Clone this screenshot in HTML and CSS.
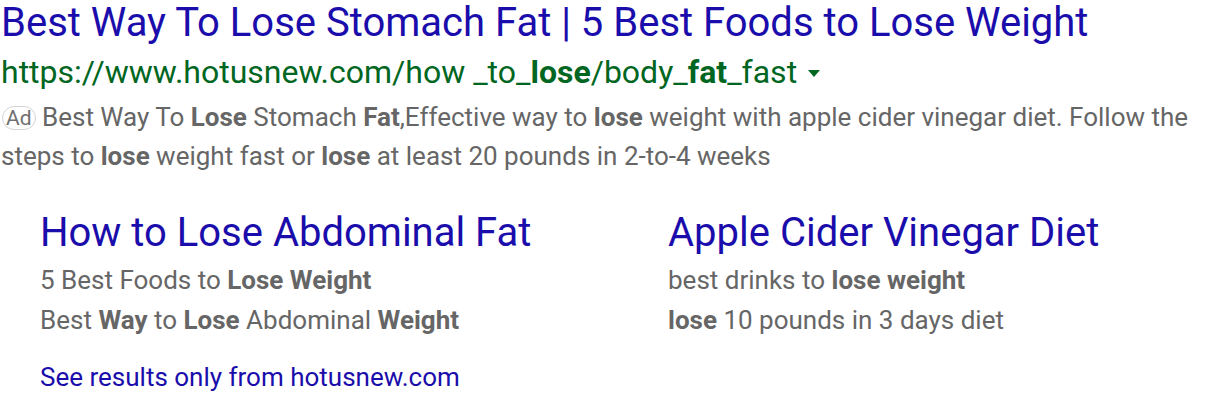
FILE: index.html
```html
<!DOCTYPE html>
<html>
<head>
<meta charset="utf-8">
<link rel="stylesheet" href="styles.css">
</head>
<body>
<div class="result">
  <h3 class="title">Best Way To Lose Stomach Fat | 5 Best Foods to Lose Weight</h3>
  <div class="url"><span>https://www.hotusnew.com/how _to_<b>lose</b>/body_<b>fat</b>_fast</span><span class="arrow"></span></div>
  <div class="desc"><span class="ad">Ad</span> Best Way To <b>Lose</b> Stomach <b>Fat</b>,Effective way to <b>lose</b> weight with apple cider vinegar diet. Follow the steps to <b>lose</b> weight fast or <b>lose</b> at least 20 pounds in 2-to-4 weeks</div>
  <div class="sitelinks">
    <div class="sitelink">
      <div class="sl-title">How to Lose Abdominal Fat</div>
      <div class="sl-lines">
        <div class="sl-line">5 Best Foods to <b>Lose Weight</b></div>
        <div class="sl-line">Best <b>Way</b> to <b>Lose</b> Abdominal <b>Weight</b></div>
      </div>
    </div>
    <div class="sitelink">
      <div class="sl-title">Apple Cider Vinegar Diet</div>
      <div class="sl-lines">
        <div class="sl-line">best drinks to <b>lose weight</b></div>
        <div class="sl-line"><b>lose</b> 10 pounds in 3 days diet</div>
      </div>
    </div>
  </div>
  <div class="more">See results only from hotusnew.com</div>
</div>
</body>
</html>
```

FILE: styles.css
```css
html, body {
  margin: 0;
  padding: 0;
  background: #fff;
}
body {
  font-family: Roboto, "Liberation Sans", sans-serif;
}
.result {
  padding: 0 0 0 1px;
}
.title {
  margin: 0;
  font-weight: 400;
  font-size: 40px;
  line-height: 46px;
  color: #1a0dab;
  white-space: nowrap;
}
.url {
  font-size: 32px;
  line-height: 52px;
  height: 52px;
  color: #006621;
  display: flex;
  align-items: center;
  white-space: pre;
}
.url b { font-weight: 700; }
.arrow {
  display: block;
  width: 0;
  height: 0;
  border-left: 6px solid transparent;
  border-right: 6px solid transparent;
  border-top: 7px solid #006621;
  margin-left: 11px;
  margin-top: 2px;
}
.desc {
  font-size: 26px;
  line-height: 39px;
  color: #666;
}
.desc b, .sl-line b { color: #666; font-weight: 700; }
.ad {
  display: inline-block;
  box-sizing: border-box;
  height: 24px;
  border: 1px solid #d4d4d4;
  border-radius: 12px;
  font-size: 21px;
  line-height: 22px;
  padding: 0 3px;
  color: #707070;
  vertical-align: 1px;
  margin-left: 1px;
}
.sitelinks {
  display: grid;
  grid-template-columns: 628px 1fr;
  padding-left: 39px;
  margin-top: 34px;
}
.sl-title {
  font-size: 40px;
  line-height: 46px;
  color: #1a0dab;
  white-space: nowrap;
}
.sl-lines {
  padding-top: 4px;
}
.sl-line {
  font-size: 26px;
  line-height: 40px;
  color: #666;
  white-space: nowrap;
}
.more {
  padding-left: 39px;
  margin-top: 17px;
  font-size: 26px;
  line-height: 40px;
  color: #1a0dab;
}
```
